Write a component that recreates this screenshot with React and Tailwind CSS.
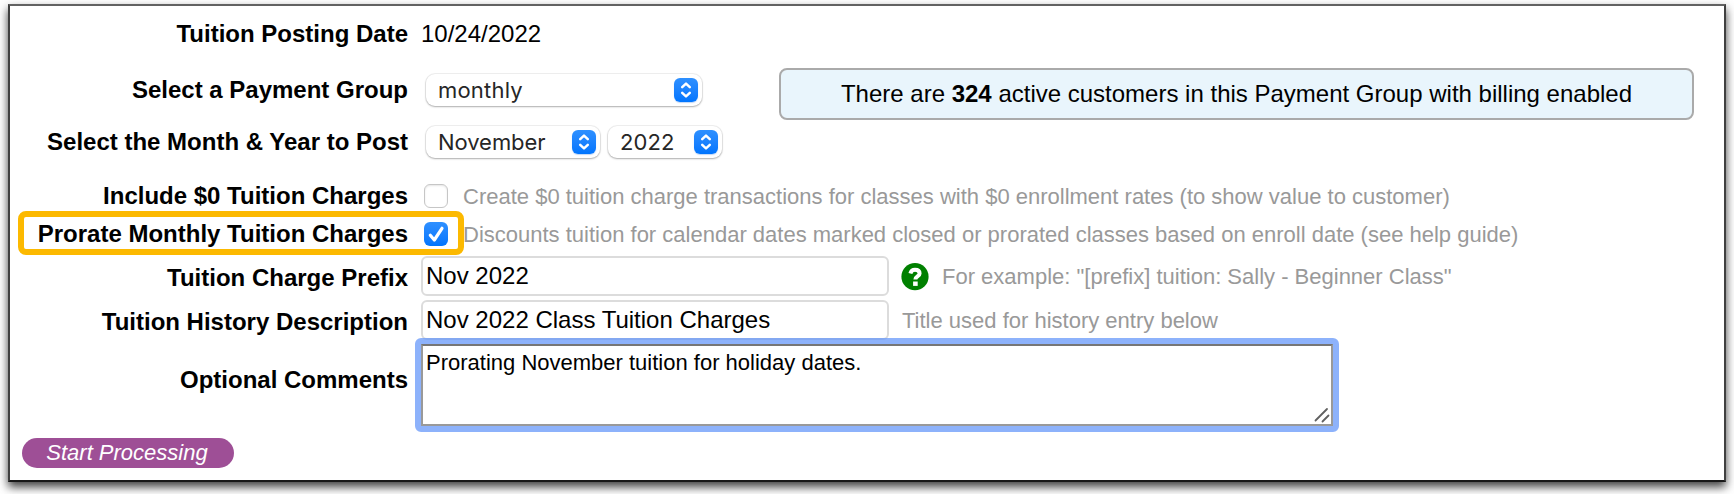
import React from 'react'

const SelectBox = ({ value, className, textClassName }) => (
  <div className={`relative h-8 rounded-[9px] bg-white shadow-[0_0_0_1px_rgba(0,0,0,0.06),0_1px_2px_rgba(0,0,0,0.28)] ${className}`}>
    <select
      defaultValue={value}
      className={`block h-8 w-full appearance-none bg-transparent pl-[12px] font-['Inter',sans-serif] text-[22px] leading-8 text-[#262626] outline-none ${textClassName}`}
    >
      <option>{value}</option>
    </select>
    <span className="pointer-events-none absolute top-1 right-1 flex h-6 w-6 items-center justify-center rounded-[6px] bg-linear-to-b from-[#2e90ff] to-[#0075fe] shadow-[0_1px_1px_rgba(0,90,220,0.25)]">
      <svg width="24" height="24" viewBox="0 0 24 24" fill="none" stroke="white" strokeWidth="2.5" strokeLinecap="round" strokeLinejoin="round">
        <path d="M8.2 9.1 12 5.6l3.8 3.5M8.2 14.9l3.8 3.5 3.8-3.5" />
      </svg>
    </span>
  </div>
)

const Checkbox = ({ checked }) => {
  if (!checked) {
    return (
      <span
        role="checkbox"
        aria-checked="false"
        className="h-6 w-6 shrink-0 rounded-[6px] border border-[#c6c6c6] bg-white shadow-[inset_0_1px_2px_rgba(0,0,0,0.1)]"
      />
    )
  }

  return (
    <span
      role="checkbox"
      aria-checked="true"
      className="h-6 w-6 shrink-0 rounded-[6px] bg-linear-to-b from-[#2e90ff] to-[#0075fe]"
    >
      <svg width="24" height="24" viewBox="0 0 24 24" fill="none" stroke="white" strokeWidth="3.2" strokeLinecap="round" strokeLinejoin="round">
        <path d="m6.3 13.2 4 4.8L18 6.3" />
      </svg>
    </span>
  )
}

const HelpIcon = () => (
  <svg width="28" height="28" viewBox="0 0 28 28" className="shrink-0">
    <circle cx="14" cy="13.7" r="13.6" fill="#008000" />
    <path d="M9.4 10.4C10 8 11.6 6.8 14 6.8c2.7 0 4.6 1.3 4.6 3.6 0 3.1-4.2 3-4.2 6" fill="none" stroke="white" strokeWidth="4" />
    <rect x="12.1" y="18.5" width="4.6" height="4.4" fill="white" />
  </svg>
)

const Row = ({ label, className, labelClassName = '', children }) => (
  <div className={`flex items-center ${className}`}>
    <label className={`w-[399px] shrink-0 pr-px text-right text-2xl leading-7 font-bold ${labelClassName}`}>{label}</label>
    {children}
  </div>
)

const Hint = ({ className, children }) => (
  <span className={`pt-[2px] text-[22px] leading-7 text-[#999] ${className}`}>{children}</span>
)

const inputClass = 'ml-3 h-10 w-[468px] shrink-0 rounded-[6px] border-2 border-[#dcdcdc] bg-white pr-1 pl-[3px] pb-px text-2xl outline-none'

const App = () => {
  return (
    <div className="h-[494px] w-[1734px] overflow-hidden bg-white px-2 pt-1 font-['Liberation_Sans',Arial,sans-serif] whitespace-nowrap text-black">
      <div className="h-[478px] w-[1718px] border-2 border-t-[#626262] border-r-[#404040] border-b-[#181818] border-l-[#404040] bg-white shadow-[0_5px_9px_rgba(0,0,0,0.75)]">
        <div className="flex">
          <div className="w-[769px]">
            <Row label="Tuition Posting Date" className="h-14">
              <span className="ml-3 text-2xl leading-7">10/24/2022</span>
            </Row>
            <Row label="Select a Payment Group" className="h-14">
              <SelectBox value="monthly" className="ml-[17px] w-[276px]" textClassName="tracking-[0.2px]" />
            </Row>
            <Row label="Select the Month & Year to Post" className="h-12">
              <SelectBox value="November" className="ml-[17px] w-[174px]" textClassName="tracking-[-0.05px]" />
              <SelectBox value="2022" className="ml-2 w-[114px]" textClassName="tracking-[0.1px]" />
            </Row>
          </div>
          <div className="mt-[62px] flex h-[52px] w-[915px] items-center justify-center rounded-lg border-2 border-[#aaa] bg-[#e9f5fc] text-2xl">
            <p>
              There are <b>324</b> active customers in this Payment Group with billing enabled
            </p>
          </div>
        </div>

        <Row label="Include $0 Tuition Charges" className="mt-[11px] h-[38px]">
          <span className="ml-[15px] flex"><Checkbox /></span>
          <Hint className="ml-[15px]">Create $0 tuition charge transactions for classes with $0 enrollment rates (to show value to customer)</Hint>
        </Row>

        {/* highlighted option */}
        <div className="relative">
          <Row label="Prorate Monthly Tuition Charges" className="h-[38px]">
            <span className="ml-[15px] flex"><Checkbox checked /></span>
            <Hint className="ml-[15px]">Discounts tuition for calendar dates marked closed or prorated classes based on enroll date (see help guide)</Hint>
          </Row>
          <div className="absolute -top-1 left-2 h-11 w-[446px] rounded-lg border-[6px] border-[#fcb900]" />
        </div>

        <Row label="Tuition Charge Prefix" className="mt-px h-11" labelClassName="pt-1">
          <input className={inputClass} defaultValue="Nov 2022" />
          <span className="ml-[12px] flex pt-px"><HelpIcon /></span>
          <Hint className="ml-[13px]">For example: "[prefix] tuition: Sally - Beginner Class"</Hint>
        </Row>
        <Row label="Tuition History Description" className="h-11" labelClassName="pt-1">
          <input className={inputClass} defaultValue="Nov 2022 Class Tuition Charges" />
          <Hint className="ml-[13px]">Title used for history entry below</Hint>
        </Row>
        <Row label="Optional Comments" className="h-[86px]" labelClassName="pb-[10px]">
          <div className="relative ml-3 before:pointer-events-none before:absolute before:-inset-[6px] before:rounded-[6px] before:border-[6px] before:border-[#5d92fa]/70">
            <textarea
              className="block h-[82px] w-[912px] resize-none border-2 border-[#999] border-t-[#767676] bg-white pt-1 pr-1 pl-[3px] text-[22px] leading-[26px] outline-none"
              defaultValue="Prorating November tuition for holiday dates."
            />
            <svg width="16" height="16" viewBox="0 0 16 16" className="absolute right-[3px] bottom-[3px]" stroke="#606060" strokeWidth="1.8" strokeLinecap="round">
              <path d="M1.5 13.5 13 2M8.5 14.5 14.5 8.5" />
            </svg>
          </div>
        </Row>

        <button className="mt-[10px] ml-3 block h-[30px] w-[212px] rounded-full bg-[#9e4f96] pr-[2px] text-center text-[22px] leading-7 text-white italic">
          Start Processing
        </button>
      </div>
    </div>
  )
}

export default App
